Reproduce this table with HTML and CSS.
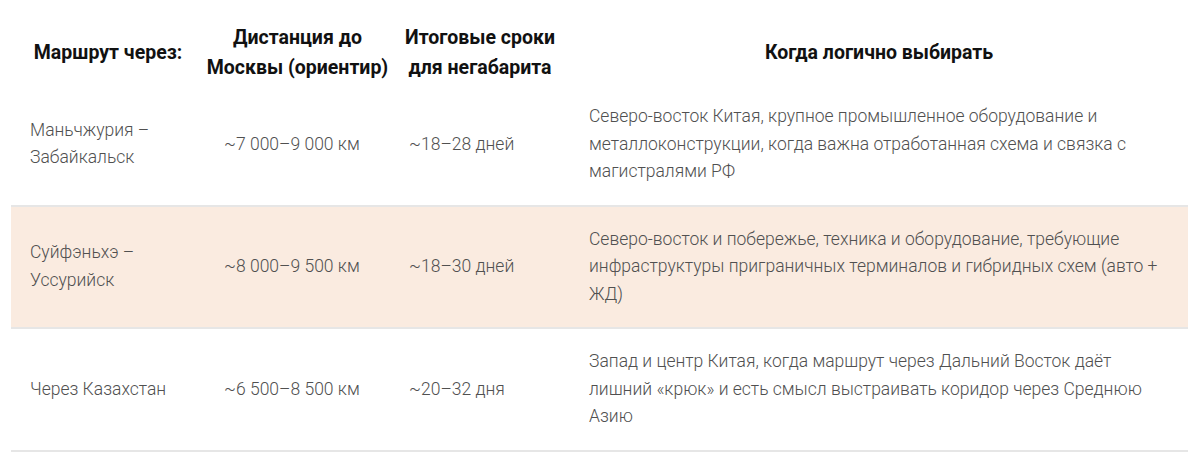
FILE: index.html
```html
<!DOCTYPE html>
<html lang="ru">
<head>
<meta charset="utf-8">
<link rel="stylesheet" href="styles.css">
</head>
<body>
<table class="routes">
  <colgroup>
    <col class="c1"><col class="c2"><col class="c3"><col class="c4">
  </colgroup>
  <thead>
    <tr>
      <th>Маршрут через:</th>
      <th>Дистанция до Москвы (ориентир)</th>
      <th>Итоговые сроки для негабарита</th>
      <th>Когда логично выбирать</th>
    </tr>
  </thead>
  <tbody>
    <tr>
      <td>Маньчжурия – Забайкальск</td>
      <td>~7&nbsp;000–9&nbsp;000 км</td>
      <td>~18–28 дней</td>
      <td>Северо-восток Китая, крупное промышленное оборудование и металлоконструкции, когда важна отработанная схема и связка с магистралями РФ</td>
    </tr>
    <tr class="alt">
      <td>Суйфэньхэ – Уссурийск</td>
      <td>~8&nbsp;000–9&nbsp;500 км</td>
      <td>~18–30 дней</td>
      <td>Северо-восток и побережье, техника и оборудование, требующие инфраструктуры приграничных терминалов и гибридных схем (авто + ЖД)</td>
    </tr>
    <tr>
      <td>Через Казахстан</td>
      <td>~6&nbsp;500–8&nbsp;500 км</td>
      <td>~20–32 дня</td>
      <td>Запад и центр Китая, когда маршрут через Дальний Восток даёт лишний «крюк» и есть смысл выстраивать коридор через Среднюю Азию</td>
    </tr>
  </tbody>
</table>
</body>
</html>
```

FILE: styles.css
```css
html, body {
  margin: 0;
  padding: 0;
  background: #ffffff;
}
body {
  padding: 0 12px 0 11px;
  font-family: Roboto, "Liberation Sans", sans-serif;
}
.routes {
  width: 100%;
  border-collapse: collapse;
  table-layout: fixed;
}
.c1 { width: 194px; }
.c2 { width: 185px; }
.c3 { width: 180px; }
.c4 { width: auto; }
.routes th {
  font-weight: 700;
  font-size: 19.5px;
  line-height: 30px;
  color: #111111;
  text-align: center;
  vertical-align: middle;
  padding: 23px 0 1px;
}
.routes td {
  font-weight: 300;
  font-size: 17.5px;
  line-height: 27.5px;
  color: #505050;
  text-align: left;
  vertical-align: middle;
  padding: 19px 19px 19px 19px;
  border-bottom: 2px solid #e6e6e6;
}
.routes tr.alt td {
  background: #faebe0;
}
```
